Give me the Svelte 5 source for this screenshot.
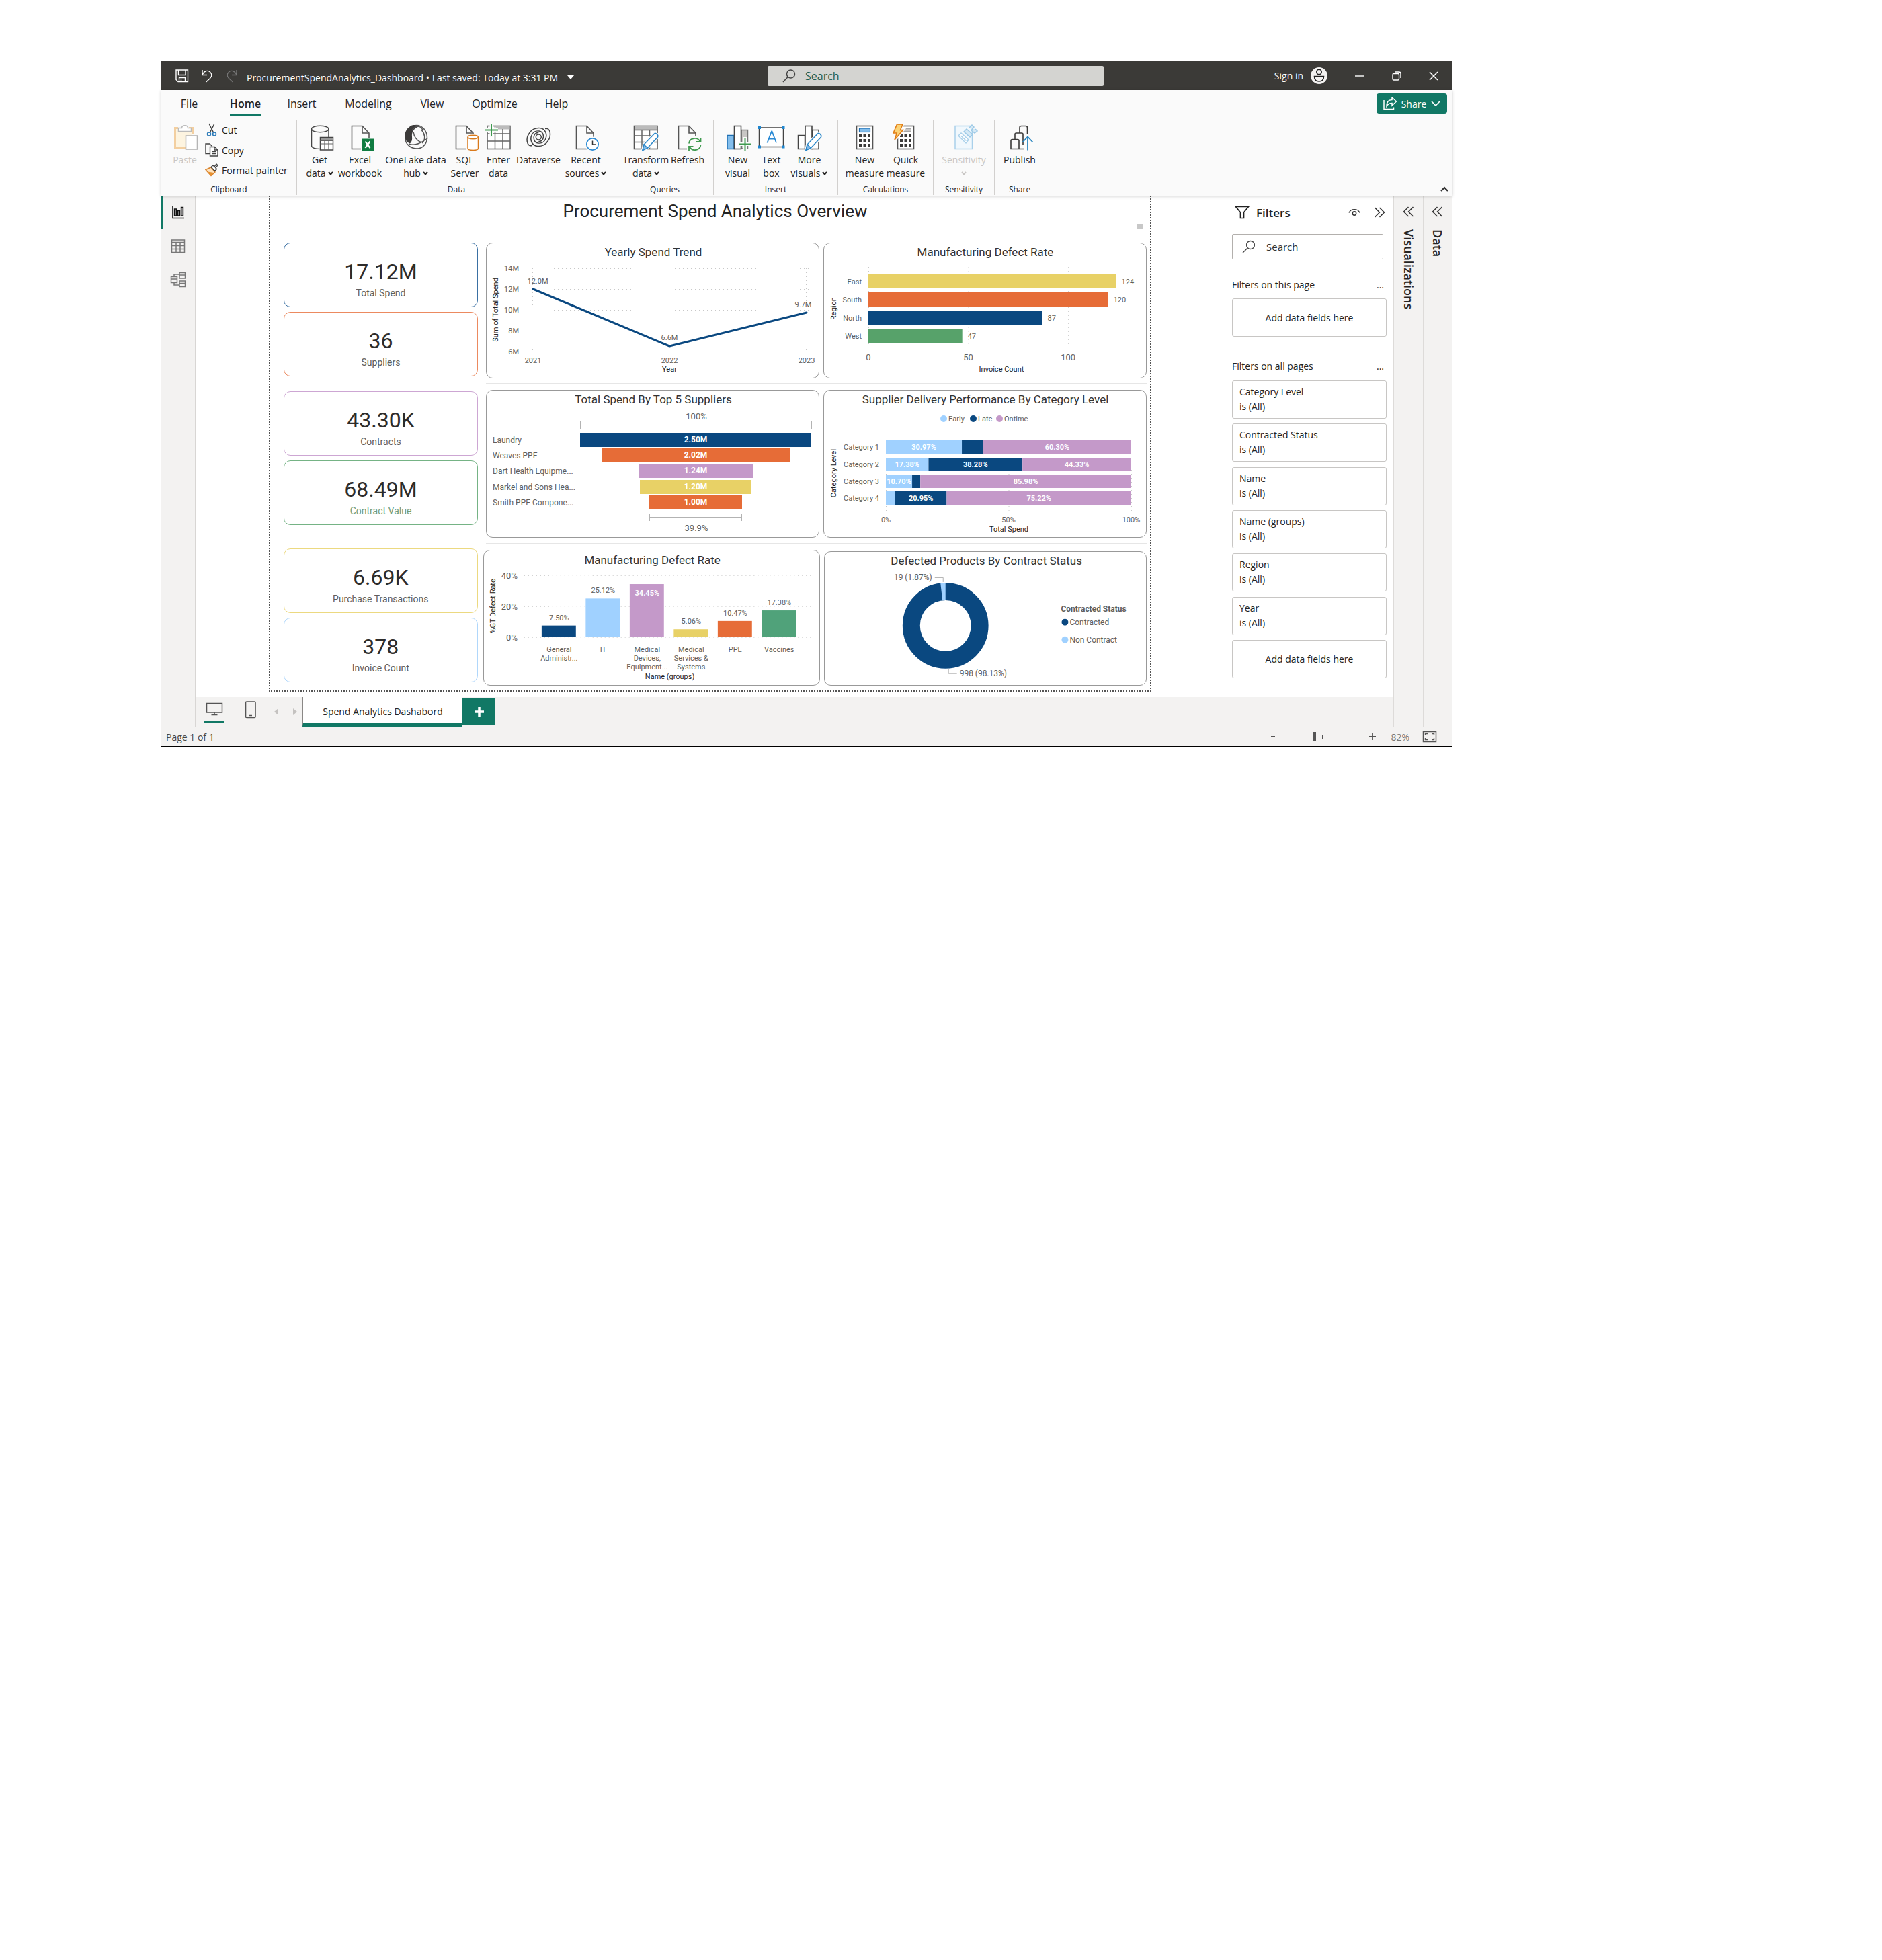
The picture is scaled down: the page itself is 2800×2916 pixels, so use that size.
<script>
  const C = {
    navy: '#0a4880',
    orange: '#e66c37',
    violet: '#c499c9',
    yellow: '#e8d166',
    green: '#57a26a',
    sky: '#a0d1ff',
    teal: '#50a27a'
  };

  const ribbonTabs = [
    { label: 'File', width: 83 },
    { label: 'Home', width: 84, active: true },
    { label: 'Insert', width: 84 },
    { label: 'Modeling', width: 114 },
    { label: 'View', width: 76 },
    { label: 'Optimize', width: 110 },
    { label: 'Help', width: 74 }
  ];

  const ribbonGroups = [
    {
      name: 'Data',
      width: 475,
      items: [
        { icon: 'get', a: 'Get', b: 'data', menu: true, width: 46 },
        { icon: 'excel', a: 'Excel', b: 'workbook', width: 74 },
        { icon: 'onelake', a: 'OneLake data', b: 'hub', menu: true, width: 92 },
        { icon: 'sql', a: 'SQL', b: 'Server', width: 54 },
        { icon: 'enter', a: 'Enter', b: 'data', width: 46 },
        { icon: 'dataverse', a: 'Dataverse', b: '', width: 73 },
        { icon: 'recent', a: 'Recent', b: 'sources', menu: true, width: 68 }
      ]
    },
    {
      name: 'Queries',
      width: 145,
      items: [
        { icon: 'transform', a: 'Transform', b: 'data', menu: true, width: 68 },
        { icon: 'refresh', a: 'Refresh', b: '', width: 56 }
      ]
    },
    {
      name: 'Insert',
      width: 185,
      items: [
        { icon: 'visual', a: 'New', b: 'visual', width: 48 },
        { icon: 'textbox', a: 'Text', b: 'box', width: 52 },
        { icon: 'more', a: 'More', b: 'visuals', menu: true, width: 61 }
      ]
    },
    {
      name: 'Calculations',
      width: 142,
      items: [
        { icon: 'measure', a: 'New', b: 'measure', width: 60 },
        { icon: 'quick', a: 'Quick', b: 'measure', width: 62 }
      ]
    },
    {
      name: 'Sensitivity',
      width: 91,
      items: [{ icon: 'sensitivity', a: 'Sensitivity', b: '', menu: true, width: 80, disabled: true }]
    },
    { name: 'Share', width: 75, items: [{ icon: 'publish', a: 'Publish', b: '', width: 60 }] }
  ];

  const kpis = [
    [
      { value: '17.12M', label: 'Total Spend', tone: 'blue' },
      { value: '36', label: 'Suppliers', tone: 'orange' }
    ],
    [
      { value: '43.30K', label: 'Contracts', tone: 'violet' },
      { value: '68.49M', label: 'Contract Value', tone: 'green' }
    ],
    [
      { value: '6.69K', label: 'Purchase Transactions', tone: 'yellow' },
      { value: '378', label: 'Invoice Count', tone: 'sky' }
    ]
  ];

  const trendTicks = ['14M', '12M', '10M', '8M', '6M'];
  const trendYears = [
    { x: 70, year: '2021' },
    { x: 273, year: '2022' },
    { x: 477, year: '2023' }
  ];

  const regions = [
    { name: 'East', value: 124, fill: C.yellow },
    { name: 'South', value: 120, fill: C.orange },
    { name: 'North', value: 87, fill: C.navy },
    { name: 'West', value: 47, fill: C.green }
  ];
  const regionScale = 2.972;

  const suppliers = [
    { name: 'Laundry', label: '2.50M', width: 344, y: 64, fill: C.navy },
    { name: 'Weaves PPE', label: '2.02M', width: 280, y: 87, fill: C.orange },
    { name: 'Dart Health Equipme...', label: '1.24M', width: 170, y: 110, fill: C.violet },
    { name: 'Markel and Sons Hea...', label: '1.20M', width: 166, y: 134, fill: C.yellow },
    { name: 'Smith PPE Compone...', label: '1.00M', width: 138, y: 157, fill: C.orange }
  ];

  const delivery = [
    { name: 'Category 1', y: 75, parts: [30.97, 8.73, 60.3], labels: ['30.97%', '', '60.30%'] },
    { name: 'Category 2', y: 101, parts: [17.38, 38.28, 44.34], labels: ['17.38%', '38.28%', '44.33%'] },
    { name: 'Category 3', y: 126, parts: [10.7, 3.32, 85.98], labels: ['10.70%', '', '85.98%'] },
    { name: 'Category 4', y: 151, parts: [3.83, 20.95, 75.22], labels: ['', '20.95%', '75.22%'] }
  ];
  const deliveryFill = [C.sky, C.navy, C.violet];
  const deliveryLegend = [
    { name: 'Early', x: 178 },
    { name: 'Late', x: 222 },
    { name: 'Ontime', x: 261 }
  ];

  function segments(row) {
    let start = 0;
    return row.parts.map((p, i) => {
      const seg = { x: 92 + start * 3.65, width: p * 3.65, fill: deliveryFill[i], label: row.labels[i] };
      start += p;
      return seg;
    });
  }

  const defects = [
    { name: ['General', 'Administr...'], value: 7.5, label: '7.50%', fill: C.navy },
    { name: ['IT'], value: 25.12, label: '25.12%', fill: C.sky },
    { name: ['Medical', 'Devices,', 'Equipment...'], value: 34.45, label: '34.45%', fill: C.violet, inside: true },
    { name: ['Medical', 'Services &', 'Systems'], value: 5.06, label: '5.06%', fill: C.yellow },
    { name: ['PPE'], value: 10.47, label: '10.47%', fill: C.orange },
    { name: ['Vaccines'], value: 17.38, label: '17.38%', fill: C.teal }
  ];

  const pageFilters = ['Category Level', 'Contracted Status', 'Name', 'Name (groups)', 'Region', 'Year'];

  let zoom = $state(82);
</script>

{#snippet chevron()}
  <svg class="chev" width="8" height="6" viewBox="0 0 8 6" aria-hidden="true"><path d="M1 1l3 3.4L7 1" fill="none" stroke="currentColor" stroke-width="2" /></svg>
{/snippet}

{#snippet page(x)}
  <path d="M{x} 3.5h15.5l10 10.5v23.5h-25.5z" fill="#fbfbfb" stroke="#555" stroke-width="1.6" />
  <path d="M{x + 15.5} 3.5v10.5h10" fill="none" stroke="#555" stroke-width="1.6" />
{/snippet}

{#snippet pencil()}
  <path d="M17 39.5l2-8.5L34.5 15c2-2 6.5 2 5 5L24.5 36z" fill="#fafafa" stroke="#fafafa" stroke-width="4" />
  <path d="M17 39.5l2-8.5L34.5 15c2-2 6.5 2 5 5L24.5 36z" fill="#fff" stroke="#2a86c8" stroke-width="1.5" />
  <path d="M17 39.5l2-8.5 5.5 5z" fill="#83b9e6" stroke="#2a86c8" stroke-width="1.3" />
{/snippet}

{#snippet calc()}
  <rect x="9.5" y="3.5" width="24" height="34" fill="#fff" stroke="#555" stroke-width="1.6" />
  {#each [16, 23, 30] as y}
    {#each [13, 19.5, 26] as x}
      <rect {x} {y} width="4" height="4" fill="#3b3a39" />
    {/each}
  {/each}
{/snippet}

{#snippet ribbonIcon(name)}
  <svg class="ricon" width="44" height="40" viewBox="0 0 44 40" aria-hidden="true">
    {#if name === 'get'}
      <path d="M9.5 8v25c0 3 6 4.5 12 4.5M35 8v12" fill="none" stroke="#444" stroke-width="1.5" />
      <ellipse cx="22.2" cy="8" rx="12.8" ry="4.8" fill="none" stroke="#444" stroke-width="1.5" />
      <rect x="22.5" y="20.5" width="19" height="18.5" fill="#fff" stroke="#444" stroke-width="1.5" />
      <rect x="23" y="21" width="18" height="4" fill="#999" />
      <path d="M22.5 25.5h19M22.5 30h19M22.5 34.5h19M29 25v14M35 25v14" stroke="#666" stroke-width="1.2" />
    {:else if name === 'excel'}
      {@render page(9.5)}
      <rect x="23" y="21.5" width="20" height="19" fill="#fafafa" />
      <rect x="24" y="22.5" width="18" height="17.5" fill="#107c41" />
      <path d="M29.5 26.5l7 9.5M36.5 26.5l-7 9.5" stroke="#fff" stroke-width="2.2" />
    {:else if name === 'onelake'}
      <path d="M23 2.5c8 0 15.500 8 15.500 18.500 0 8-6 16-15 16S6 31 6 22C6 11 14 2.500 23 2.500z" fill="#fafafa" stroke="#555" stroke-width="1.5" />
      <path d="M12 5c4-4.500 10-3.500 13.500-.5-6 2-10.500 8-9.500 15 .5 4 0 7-3 10-6-2-8.500-8-7.500-14C6.200 11 9 7 12 5z" fill="#3b3a39" />
      <path d="M16 10c6-8 14-7 16 0M18 12c1 9 7 14 12 16M11 30c10 4 19-2 28-8M30 9c5 6 7 14 1 20" fill="none" stroke="#555" stroke-width="1.5" />
    {:else if name === 'sql'}
      {@render page(8.5)}
      <path d="M24 16h20v24H24z" fill="#fafafa" />
      <path d="M26 20v16.5c0 4 15.5 4 15.5 0V20" fill="#fff" stroke="#d97a1c" stroke-width="1.5" />
      <ellipse cx="33.7" cy="20" rx="7.7" ry="2.7" fill="#fff" stroke="#d97a1c" stroke-width="1.5" />
    {:else if name === 'enter'}
      <rect x="5" y="3.5" width="34" height="34" fill="#fff" stroke="#666" stroke-width="1.6" />
      <rect x="18" y="4" width="20.5" height="4.5" fill="#bbb" />
      <path d="M5 15h34M5 26h34M16.5 4v33M28 8v29" stroke="#666" stroke-width="1.5" />
      <path d="M0 9.5h21M11 -1v21" stroke="#fafafa" stroke-width="5" />
      <path d="M2 9.5h19M11 0v19" stroke="#3f9a4f" stroke-width="2" />
    {:else if name === 'dataverse'}
      <g fill="none" stroke="#444" stroke-width="1.5">
        {#each [0, 180] as turn}
          <path transform="rotate({turn} 22.3 20)" d="M32 7.5C40 5 42 18 36 26c-3 5-9 8-15 7.500C12 33 9 24 12 17c2-5 7-6.500 11-6C29 12 30.500 18 29 22c-1 4-4 4.500-6.700 4.500" />
        {/each}
        <circle cx="22.3" cy="20" r="4" />
      </g>
    {:else if name === 'recent'}
      {@render page(7.5)}
      <circle cx="31.5" cy="30.5" r="11" fill="#fafafa" />
      <circle cx="31.5" cy="30.5" r="8.7" fill="#fff" stroke="#2a8ad4" stroke-width="1.7" />
      <path d="M31.5 25.5v5.5h4.5" fill="none" stroke="#333" stroke-width="1.5" />
    {:else if name === 'transform'}
      <rect x="4.5" y="3.5" width="34.5" height="34" fill="#fff" stroke="#555" stroke-width="1.6" />
      <rect x="5" y="4" width="33.5" height="5" fill="#bbb" />
      <path d="M4.5 9.5h34.5M4.5 18h34.5M4.5 27.5h34.5M16 9.5v28M27.5 9.5v28" stroke="#666" stroke-width="1.5" />
      {@render pencil()}
    {:else if name === 'refresh'}
      {@render page(8.5)}
      <rect x="21" y="19" width="23" height="22" fill="#fafafa" />
      <path d="M24 29.5c1-9 13-10 16.5-3M41.5 31.5c-1 9-13 10-16.5 3M41.5 21v6h-6.5M24 40v-6h6.5" fill="none" stroke="#3f9a4f" stroke-width="1.8" />
    {:else if name === 'visual'}
      <rect x="27" y="9.5" width="9.5" height="27.5" fill="#c8c6c4" stroke="#777" stroke-width="1.5" />
      <rect x="6" y="17.5" width="10" height="20" fill="#83beec" stroke="#1f6fb2" stroke-width="1.5" />
      <rect x="16.5" y="3.5" width="10" height="34" fill="#fff" stroke="#444" stroke-width="1.6" />
      <path d="M22 30.5h22M32.5 20v20" stroke="#fafafa" stroke-width="5" />
      <path d="M23.5 30.5h18.5M32.5 21v19" stroke="#3f9a4f" stroke-width="2" />
    {:else if name === 'textbox'}
      <rect x="3.5" y="6" width="36" height="28.5" fill="#fff" stroke="#444" stroke-width="1.5" />
      <path d="M15.5 28.5l6.5-17h.5l6.5 17M18 22.5h9" fill="none" stroke="#2a8ad4" stroke-width="1.8" />
      {#each [2, 37.5] as x}
        {#each [4, 32.5] as y}
          <rect {x} {y} width="4" height="4" fill="#1f86cf" />
        {/each}
      {/each}
    {:else if name === 'more'}
      <rect x="26.5" y="9.5" width="9.5" height="28" fill="#fff" stroke="#444" stroke-width="1.5" />
      <rect x="5.5" y="17.5" width="10" height="20" fill="#fff" stroke="#444" stroke-width="1.5" />
      <rect x="16" y="3.5" width="10" height="34" fill="#fff" stroke="#444" stroke-width="1.6" />
      {@render pencil()}
    {:else if name === 'measure'}
      {@render calc()}
      <rect x="13.5" y="7" width="16" height="5.5" fill="#83beec" stroke="#1f6fb2" stroke-width="1.2" />
    {:else if name === 'quick'}
      {@render calc()}
      <rect x="15" y="7" width="14.5" height="5" fill="#c8c6c4" stroke="#888" />
      <path d="M8.5 0H18l-3.5 8.5H19L5 26l3-11H2.5z" fill="#fafafa" stroke="#fafafa" stroke-width="3" />
      <path d="M8.5 1H17l-3.5 8.5h4L5 24l3.2-10H3z" fill="#fcd377" stroke="#e07b12" stroke-width="1.5" />
    {:else if name === 'sensitivity'}
      <rect x="9" y="3.5" width="25.5" height="34" fill="#f1f8fd" stroke="#a9d0ea" stroke-width="1.5" />
      <path d="M14 18l4-4 11 10-4 5zM17.5 18l8 7.5" fill="#fff" stroke="#a9d0ea" stroke-width="1.5" />
      <path d="M22 12l4-4 9 8-4 4zM29 7l5-5 3 3-4 5 5 4 4-3-3-3" fill="#d5e9f6" stroke="#9cc9e6" stroke-width="1.5" />
    {:else if name === 'publish'}
      <path d="M9 37.5v-12q0-2 2-2h8q2 0 2 2v12zM15 23v-7q0-2 2-2h8q2 0 2 2v16M22 13.5V6q0-2.5 2.5-2.5h6.5q2.5 0 2.5 2.5v9M21 37.5h8" fill="none" stroke="#3b3a39" stroke-width="1.6" />
      <path d="M34 39.5V20M26.5 27.5L34 19.5l7.5 8" fill="none" stroke="#2a86c0" stroke-width="1.8" />
    {/if}
  </svg>
{/snippet}

{#snippet kpiPair(list)}
  <div class="kpis">
    {#each list as k}
      <div class="kpi {k.tone}">
        <strong>{k.value}</strong>
        <span>{k.label}</span>
      </div>
    {/each}
  </div>
{/snippet}

<div class="desktop">
  <div class="window">
    <header class="titlebar">
      <div class="quick">
        <button aria-label="Save"><svg width="20" height="20" viewBox="0 0 20 20"><path d="M1 1h17.5v17.5H4L1 15.5zM4.5 1v7.5h10.5V1M5.5 18.5v-6h9v6M8.5 18.5v-3" fill="none" stroke="#fff" stroke-width="1.4" /></svg></button>
        <button aria-label="Undo"><svg width="20" height="20" viewBox="0 0 20 20"><path d="M3 1v7.500h7M3 8c3-6 8-7 11.500-4 3 3 3 6.500 0 9.500L8.500 19" fill="none" stroke="#fff" stroke-width="1.4" /></svg></button>
        <button aria-label="Redo"><svg width="20" height="20" viewBox="0 0 20 20"><path d="M17 1v7.500h-7M17 8c-3-6-8-7-11.500-4-3 3-3 6.500 0 9.500L11.500 19" fill="none" stroke="#777" stroke-width="1.4" /></svg></button>
      </div>
      <button class="docname">ProcurementSpendAnalytics_Dashboard • Last saved: Today at 3:31 PM<svg width="10" height="6" viewBox="0 0 10 6"><path d="M0 0h10L5 6z" fill="#fff" /></svg></button>
      <label class="topsearch">
        <svg width="20" height="20" viewBox="0 0 20 20"><circle cx="12.5" cy="7" r="6" fill="none" stroke="#444" stroke-width="1.5" /><path d="M8.2 11.5L1 19" stroke="#444" stroke-width="1.5" /></svg>
        <input type="text" placeholder="Search" aria-label="Search" />
      </label>
      <div class="winctl">
        <button class="signin">Sign in
          <svg width="25" height="25" viewBox="0 0 25 25"><circle cx="12.5" cy="12.5" r="12.5" fill="#f3f2f1" /><circle cx="12.5" cy="7" r="3.7" fill="none" stroke="#222" stroke-width="1.6" /><path d="M5.5 13.500h14c0 5-3 7.500-7 7.500s-7-2.500-7-7.500z" fill="none" stroke="#222" stroke-width="1.6" /></svg>
        </button>
        <button aria-label="Minimize"><svg width="14" height="14" viewBox="0 0 14 14"><path d="M0 7h14" stroke="#fff" stroke-width="1.4" /></svg></button>
        <button aria-label="Restore"><svg width="14" height="14" viewBox="0 0 14 14"><rect x="1" y="3.5" width="9.5" height="9.5" rx="1.5" fill="none" stroke="#fff" stroke-width="1.4" /><path d="M4 1h6.5q2.5 0 2.5 2.5V10" fill="none" stroke="#fff" stroke-width="1.4" /></svg></button>
        <button aria-label="Close"><svg width="14" height="14" viewBox="0 0 14 14"><path d="M1 1l12 12M13 1L1 13" stroke="#fff" stroke-width="1.5" /></svg></button>
      </div>
    </header>

    <section class="ribbon">
      <nav class="tabs">
        {#each ribbonTabs as t}
          <button class:active={t.active} style="width:{t.width}px"><span>{t.label}</span></button>
        {/each}
        <button class="share">
          <svg width="20" height="20" viewBox="0 0 20 20"><path d="M1 5v13.5h14.5v-3" fill="none" stroke="#fff" stroke-width="1.5" /><path d="M13 1l6.500 6L13 13V9.500c-4 0-6 1-8 4.500 0-6 3-9.500 8-9.500z" fill="none" stroke="#fff" stroke-width="1.5" /></svg>
          Share
          <svg width="14" height="8" viewBox="0 0 14 8"><path d="M1 1l6 6 6-6" fill="none" stroke="#fff" stroke-width="1.7" /></svg>
        </button>
      </nav>
      <div class="groups">
        <div class="group clip">
          <div class="items">
            <button class="big off">
              <svg class="ricon" width="44" height="40" viewBox="0 0 44 40" aria-hidden="true">
                <path d="M12 6.5H7.5v29h17" fill="none" stroke="#f3cfa0" stroke-width="3" /><path d="M28 6.5h5.5V16" fill="none" stroke="#f3cfa0" stroke-width="3" />
                <rect x="9" y="8" width="23" height="26" fill="#fdf4e0" />
                <path d="M12.5 11.5v-5h5c0-5 9-5 9 0h5v5z" fill="#fff" stroke="#bbb" stroke-width="1.5" />
                <rect x="23.5" y="18" width="17" height="20" fill="#fff" stroke="#b5b5b5" stroke-width="1.6" />
              </svg>
              <span>Paste</span>
            </button>
            <div class="small">
              <button><svg width="20" height="20" viewBox="0 0 20 20"><path d="M6 1l6.5 13M14 1L7.5 14" stroke="#444" stroke-width="1.5" /><circle cx="6" cy="16.5" r="2.5" fill="none" stroke="#2a7ab8" stroke-width="1.5" /><circle cx="14" cy="16.5" r="2.5" fill="none" stroke="#2a7ab8" stroke-width="1.5" /></svg>Cut</button>
              <button><svg width="20" height="20" viewBox="0 0 20 20"><path d="M7 15.5H1V1h6l3.5 3.5" fill="none" stroke="#444" stroke-width="1.4" /><path d="M7.5 5.5h7l4.5 4.5v9H7.5zM14 5.5V10h5M10 12.5h6M10 15.5h6" fill="#fff" stroke="#444" stroke-width="1.4" /></svg>Copy</button>
              <button><svg width="20" height="20" viewBox="0 0 20 20"><path d="M1 9.5L9 6l6 7-6 5.5z" fill="#fde3c0" stroke="#d9822b" stroke-width="1.5" /><path d="M4 12.5l9 1.5-4 4.5z" fill="#e8912f" /><path d="M9 5.5l3-2.5 2 2 3-4 2 2-3.5 3.5 2 2-3 3z" fill="#fff" stroke="#444" stroke-width="1.4" /></svg>Format painter</button>
            </div>
          </div>
          <div class="gname">Clipboard</div>
        </div>
        {#each ribbonGroups as g}
          <div class="group" style="width:{g.width}px">
            <div class="items">
              {#each g.items as it}
                <button class="big" class:off={it.disabled} style="width:{it.width}px">
                  {@render ribbonIcon(it.icon)}
                  <span>{it.a}</span>
                  <span>{it.b}{#if it.menu}{@render chevron()}{/if}</span>
                </button>
              {/each}
            </div>
            <div class="gname">{g.name}</div>
          </div>
        {/each}
        <button class="collapse" aria-label="Collapse ribbon"><svg width="12" height="8" viewBox="0 0 12 8"><path d="M1 7l5-5 5 5" fill="none" stroke="#333" stroke-width="2.2" /></svg></button>
      </div>
    </section>

    <div class="body">
      <nav class="rail">
        <button class="current" aria-label="Report view"><svg width="24" height="24" viewBox="0 0 24 24"><path d="M4 3v17.5h17" fill="none" stroke="#111" stroke-width="1.6" /><path d="M6.5 7h3v10h-3zM11.5 9.5h3V17h-3zM16.5 4.5h3V17h-3z" fill="#999" stroke="#111" stroke-width="1.4" /></svg></button>
        <button aria-label="Table view"><svg width="24" height="24" viewBox="0 0 24 24"><path d="M2.5 3h19v18.5h-19zM2.5 6.5h19M2.5 11.5h19M2.5 16.5h19M9 6.5v15M15 6.5v15" fill="none" stroke="#777" stroke-width="1.5" /></svg></button>
        <button aria-label="Model view"><svg width="24" height="24" viewBox="0 0 24 24"><path d="M1.5 7.5h9v9h-9zM1.5 11h9M14 1.5h8.5V10H14zM14 5h8.5M14 14h8.5v8.5H14zM14 17.5h8.5M6 7.5V4h8M6 16.5V20h8" fill="none" stroke="#777" stroke-width="1.5" /></svg></button>
      </nav>

      <div class="middle">
        <div class="work">
          <main class="canvas">
            <div class="report">
              <div class="head">
                <h1>Procurement Spend Analytics Overview</h1>
                <i class="marker"></i>
              </div>

              <div class="row first">
                {@render kpiPair(kpis[0])}
                <section class="card">
                  <svg viewBox="1 1 494 200" role="img" aria-label="Yearly Spend Trend">
                    <text class="t" x="249" y="20">Yearly Spend Trend</text>
                    {#each trendTicks as tick, i}
                      <path class="grid" d="M59 {38.5 + i * 31}H485" />
                      <text class="s end" x="49" y={42 + i * 31}>{tick}</text>
                    {/each}
                    {#each trendYears as p}
                      <path class="grid" d="M{p.x - 0.5} 38V163" />
                      <text class="s mid" x={p.x} y="179">{p.year}</text>
                    {/each}
                    <path d="M70 69L273 154L477 104" fill="none" stroke={C.navy} stroke-width="3" stroke-linejoin="round" stroke-linecap="round" />
                    <text class="s mid" x="77" y="61">12.0M</text>
                    <text class="s mid" x="273" y="145">6.6M</text>
                    <text class="s mid" x="472" y="96">9.7M</text>
                    <text class="s mid dark" x="273" y="192">Year</text>
                    <text class="s mid dark" transform="translate(18 100) rotate(-90)">Sum of Total Spend</text>
                  </svg>
                </section>
                <section class="card">
                  <svg viewBox="1 1 479 200" role="img" aria-label="Manufacturing Defect Rate by region">
                    <text class="t" x="241" y="20">Manufacturing Defect Rate</text>
                    {#each [0, 50, 100] as v}
                      <path class="grid" d="M{67.5 + v * regionScale} 36V160" />
                      <text class="l mid" x={67 + v * regionScale} y="175">{v}</text>
                    {/each}
                    {#each regions as r, i}
                      <rect x="67" y={47 + i * 27} width={r.value * regionScale} height="21" fill={r.fill} />
                      <text class="s end" x="57" y={62 + i * 27}>{r.name}</text>
                      <text class="s" x={75 + r.value * regionScale} y={62 + i * 27}>{r.value}</text>
                    {/each}
                    <text class="s mid dark" x="265" y="192">Invoice Count</text>
                    <text class="s mid dark" transform="translate(19 98) rotate(-90)">Region</text>
                  </svg>
                </section>
                <hr />
              </div>

              <div class="row second">
                {@render kpiPair(kpis[1])}
                <section class="card">
                  <svg viewBox="1 1 494 218" role="img" aria-label="Total Spend By Top 5 Suppliers">
                    <text class="t" x="249" y="20">Total Spend By Top 5 Suppliers</text>
                    <text class="l mid" x="313" y="44">100%</text>
                    <path class="bracket" d="M140 52.5H484M140.5 47v11M484.5 47v11" />
                    {#each suppliers as s}
                      <rect x={312 - s.width / 2} y={s.y} width={s.width} height="21" fill={s.fill} />
                      <text class="m" x="10" y={s.y + 15}>{s.name}</text>
                      <text class="m mid in" x="312" y={s.y + 14}>{s.label}</text>
                    {/each}
                    <path class="bracket" d="M243 189.5H381M243.5 184v11M380.5 184v11" />
                    <text class="l mid" x="313" y="210">39.9%</text>
                  </svg>
                </section>
                <section class="card">
                  <svg viewBox="0 1 479 218" role="img" aria-label="Supplier Delivery Performance By Category Level">
                    <text class="t" x="240" y="20">Supplier Delivery Performance By Category Level</text>
                    {#each deliveryLegend as l, i}
                      <circle cx={l.x} cy="43" r="5" fill={deliveryFill[i]} />
                      <text class="s" x={l.x + 7} y="47">{l.name}</text>
                    {/each}
                    {#each [0, 50, 100] as v}
                      <path class="grid" d="M{92.5 + v * 3.65} 65V182" />
                      <text class="s mid" x={92 + v * 3.65} y="197">{v}%</text>
                    {/each}
                    {#each delivery as row}
                      <text class="s end" x="82" y={row.y + 14}>{row.name}</text>
                      {#each segments(row) as s}
                        <rect x={s.x} y={row.y} width={s.width} height="20" fill={s.fill} />
                        <text class="s mid in" x={s.x + s.width / 2} y={row.y + 14}>{s.label}</text>
                      {/each}
                    {/each}
                    <text class="s mid dark" x="275" y="211">Total Spend</text>
                    <text class="s mid dark" transform="translate(18 124) rotate(-90)">Category Level</text>
                  </svg>
                </section>
                <hr />
              </div>

              <div class="row third">
                {@render kpiPair(kpis[2])}
                <section class="card">
                  <svg viewBox="1 1 500 200" role="img" aria-label="Manufacturing Defect Rate by group">
                    <text class="t" x="252" y="21">Manufacturing Defect Rate</text>
                    {#each ['40%', '20%', '0%'] as tick, i}
                      <path class="grid" d="M61 {38.5 + i * 46}H493" />
                      <text class="l end" x="51" y={43 + i * 46}>{tick}</text>
                    {/each}
                    {#each defects as d, i}
                      {@const cx = 113 + i * 65.6}
                      {@const top = 130 - d.value * 2.29}
                      <rect x={cx - 26} y={top} width="51" height={130 - top} fill={d.fill} />
                      <text class="s mid" class:in={d.inside} x={cx} y={d.inside ? top + 17 : top - 8}>{d.label}</text>
                      {#each d.name as line, n}
                        <text class="s mid" x={cx} y={152 + n * 13}>{line}</text>
                      {/each}
                    {/each}
                    <text class="s mid dark" x="278" y="192">Name (groups)</text>
                    <text class="s mid dark" transform="translate(18 84) rotate(-90)">%GT Defect Rate</text>
                  </svg>
                </section>
                <section class="card last">
                  <svg viewBox="1 1 479 198" role="img" aria-label="Defected Products By Contract Status">
                    <text class="t" x="242" y="20">Defected Products By Contract Status</text>
                    <circle cx="181" cy="111" r="51" fill="none" stroke={C.navy} stroke-width="26" />
                    <path d="M181 47v26a38 38 0 0 0-4.500.3l-3-25.800a64 64 0 0 1 7.500-.5z" fill={C.sky} />
                    <path class="bracket" d="M165 39.5h12.5V46M185.5 176v6.5H198" />
                    <text class="m end" x="161" y="43">19 (1.87%)</text>
                    <text class="m" x="202" y="186">998 (98.13%)</text>
                    <text class="m bold" x="353" y="90">Contracted Status</text>
                    <circle cx="359" cy="106" r="5" fill={C.navy} />
                    <text class="m" x="366" y="110">Contracted</text>
                    <circle cx="359" cy="132" r="5" fill={C.sky} />
                    <text class="m" x="366" y="136">Non Contract</text>
                  </svg>
                </section>
              </div>
            </div>
          </main>

          <aside class="filters">
            <div class="fhead">
              <svg width="22" height="20" viewBox="0 0 22 20"><path d="M1.5 1.5h19L13.5 10v8.5h-5V10z" fill="none" stroke="#222" stroke-width="1.7" /></svg>
              <h2>Filters</h2>
              <button aria-label="Show filters"><svg width="18" height="12" viewBox="0 0 18 12"><path d="M1 6.5c3-6.5 13-6.5 16 0" fill="none" stroke="#333" stroke-width="1.4" /><circle cx="9" cy="7.5" r="2.7" fill="none" stroke="#333" stroke-width="1.5" /></svg></button>
              <button aria-label="Collapse filters"><svg width="18" height="16" viewBox="0 0 18 16"><path d="M1.5 1l7 7-7 7M8.5 1l7 7-7 7" fill="none" stroke="#333" stroke-width="1.5" /></svg></button>
            </div>
            <label class="fsearch">
              <svg width="20" height="20" viewBox="0 0 20 20"><circle cx="12.5" cy="7.5" r="6" fill="none" stroke="#444" stroke-width="1.3" /><path d="M8.2 12L1 19" stroke="#444" stroke-width="1.3" /></svg>
              <input type="text" placeholder="Search" aria-label="Search filters" />
            </label>
            <div class="fsection"><span>Filters on this page</span><button aria-label="More options">...</button></div>
            <div class="drop">Add data fields here</div>
            <div class="fsection all"><span>Filters on all pages</span><button aria-label="More options">...</button></div>
            <div class="flist">
              {#each pageFilters as f}
                <div class="fcard"><span>{f}</span><span>is (All)</span></div>
              {/each}
              <div class="drop">Add data fields here</div>
            </div>
          </aside>
        </div>

        <footer class="pages">
          <button class="device on" aria-label="Desktop layout"><svg width="26" height="20" viewBox="0 0 26 20"><path d="M1.5 1.5h23v13.5h-23zM13 15v3.5M8.5 18.5h9" fill="none" stroke="#555" stroke-width="1.5" /></svg></button>
          <button class="device phone" aria-label="Mobile layout"><svg width="18" height="26" viewBox="0 0 18 26"><rect x="1.5" y="1" width="14.5" height="23.5" rx="1.5" fill="none" stroke="#555" stroke-width="1.6" /><path d="M7 21.5h4" stroke="#555" stroke-width="1.5" /></svg></button>
          <button class="arrow" aria-label="Previous page"><svg width="6" height="10" viewBox="0 0 6 10"><path d="M6 0v10L0 5z" fill="#c4c2c0" /></svg></button>
          <button class="arrow" aria-label="Next page"><svg width="6" height="10" viewBox="0 0 6 10"><path d="M0 0v10l6-5z" fill="#c4c2c0" /></svg></button>
          <button class="sheet">Spend Analytics Dashabord</button>
          <button class="add" aria-label="New page"><svg width="14" height="14" viewBox="0 0 14 14"><path d="M7 0v14M0 7h14" stroke="#fff" stroke-width="3.5" /></svg></button>
        </footer>
      </div>

      {#each ['Visualizations', 'Data'] as pane}
        <aside class="pane">
          <button aria-label="Expand {pane}"><svg width="18" height="16" viewBox="0 0 18 16"><path d="M8.5 1l-7 7 7 7M15.5 1l-7 7 7 7" fill="none" stroke="#333" stroke-width="1.5" /></svg></button>
          <span>{pane}</span>
        </aside>
      {/each}
    </div>

    <footer class="status">
      <span>Page 1 of 1</span>
      <div class="zoom">
        <button aria-label="Zoom out"><svg width="6" height="10" viewBox="0 0 6 10"><path d="M0 5h6" stroke="#555" stroke-width="2" /></svg></button>
        <input type="range" min="10" max="190" bind:value={zoom} aria-label="Zoom level" />
        <button aria-label="Zoom in"><svg width="10" height="10" viewBox="0 0 10 10"><path d="M0 5h10M5 0v10" stroke="#555" stroke-width="1.8" /></svg></button>
        <span class="pct">{zoom}%</span>
        <button aria-label="Fit to page"><svg width="22" height="18" viewBox="0 0 22 18"><path d="M1.5 1.5h19v15h-19z" fill="none" stroke="#555" stroke-width="1.5" /><path d="M4.5 7V4.5H8M14 4.5h3.5V7M4.5 11v2.5H8M14 13.5h3.5V11" fill="none" stroke="#555" stroke-width="1.4" /></svg></button>
      </div>
    </footer>
  </div>
</div>

<style>
  :global(body) {
    background: #fff;
  }
  * {
    box-sizing: border-box;
  }
  button,
  input {
    font: inherit;
    color: inherit;
    border: 0;
    background: none;
    padding: 0;
    margin: 0;
  }
  svg {
    display: block;
    flex: none;
  }
  .desktop {
    padding: 91px 640px 0 240px;
    font-family: 'Open Sans', 'Noto Sans', sans-serif;
    font-size: 14px;
    color: #252423;
  }
  .window {
    display: flex;
    flex-direction: column;
    border-bottom: 1px solid #000;
  }

  /* Title bar */
  .titlebar {
    height: 43px;
    background: #3b3a37;
    color: #fff;
    display: flex;
    align-items: center;
  }
  .quick {
    display: flex;
    gap: 17px;
    padding-left: 21px;
  }
  .docname {
    margin-left: 12px;
    padding-top: 5px;
    display: flex;
    align-items: center;
    gap: 14px;
    width: 525px;
    font-size: 14px;
    white-space: nowrap;
  }
  .topsearch {
    flex: 0 1 500px;
    margin-left: 250px;
    height: 30px;
    border-radius: 2px;
    background: #d4d4d1;
    display: flex;
    align-items: center;
    padding-left: 22px;
    gap: 14px;
  }
  .topsearch input {
    flex: 1;
    min-width: 0;
    font-size: 16px;
  }
  .topsearch input::placeholder {
    color: #1d5f52;
    opacity: 1;
  }
  .winctl {
    margin-left: auto;
    display: flex;
    align-items: center;
    gap: 41px;
    padding-right: 20px;
  }
  .signin {
    display: flex;
    align-items: center;
    gap: 11px;
  }

  /* Ribbon */
  .ribbon {
    background: #fafafa;
    box-shadow: 0 1px 5px rgba(0, 0, 0, 0.2);
    position: relative;
    height: 157px;
  }
  .tabs {
    display: flex;
    height: 45px;
    font-size: 16px;
  }
  .tabs > button:not(.share) {
    display: flex;
    justify-content: center;
    align-items: flex-start;
    line-height: 22px;
    padding-top: 9px;
  }
  .tabs span {
    padding-bottom: 4px;
  }
  .tabs .active span {
    font-weight: 600;
    border-bottom: 3px solid #117865;
  }
  .share {
    margin: 5px 7px 0 auto;
    width: 105px;
    height: 30px;
    border-radius: 4px;
    background: #117865;
    color: #fff;
    font-size: 14px;
    display: flex;
    align-items: center;
    justify-content: center;
    gap: 7px;
  }
  .groups {
    display: flex;
    height: 111px;
  }
  .group {
    flex: none;
    border-right: 1px solid #d2d0ce;
    display: flex;
    flex-direction: column;
  }
  .clip {
    width: 202px;
  }
  .items {
    display: flex;
    justify-content: center;
    padding-top: 5px;
    flex: 1;
  }
  .clip .items {
    justify-content: flex-start;
    padding-left: 13px;
  }
  .big {
    display: flex;
    flex-direction: column;
    align-items: center;
    line-height: 20px;
    white-space: nowrap;
  }
  .big span {
    display: flex;
    align-items: center;
    gap: 3px;
    min-height: 20px;
  }
  .ricon {
    overflow: visible;
    margin-bottom: 4px;
  }
  .off {
    color: #c8c6c4;
  }
  .small {
    display: flex;
    flex-direction: column;
    padding-left: 8px;
    gap: 8px;
  }
  .small button {
    height: 22px;
    display: flex;
    align-items: center;
    gap: 5px;
    margin-top: -2px;
    margin-bottom: 2px;
    white-space: nowrap;
  }
  .gname {
    text-align: center;
    font-size: 12px;
    line-height: 16px;
  }
  .collapse {
    margin: auto 5px 5px auto;
  }

  /* Body */
  .body {
    display: flex;
    min-height: 790px;
  }
  .rail {
    width: 51px;
    background: #f3f2f1;
    border-right: 1px solid #d8d6d4;
  }
  .rail button {
    display: flex;
    align-items: center;
    justify-content: center;
    width: 50px;
    height: 50px;
  }
  .rail .current {
    border-left: 3px solid #117865;
    padding-right: 3px;
  }
  .middle {
    flex: 1;
    min-width: 0;
    display: flex;
    flex-direction: column;
  }
  .work {
    flex: 1;
    display: flex;
  }
  .canvas {
    flex: 1;
    min-width: 0;
    padding: 0 109px 8px;
  }
  .report {
    border: 2px dotted #555;
    border-top: 0;
    padding: 0 5px 7px 20px;
    font-family: Roboto, 'Open Sans', sans-serif;
  }
  .head {
    display: grid;
    height: 49px;
    margin-bottom: 21px;
  }
  .head > * {
    grid-area: 1 / 1;
  }
  h1 {
    margin: 0;
    font-weight: 400;
    font-size: 26px;
    line-height: 46px;
    text-align: center;
  }
  .marker {
    width: 9px;
    height: 7px;
    background: #c8c8c8;
    justify-self: end;
    align-self: end;
    margin-right: 5px;
  }
  .row {
    display: grid;
    column-gap: 6px;
  }
  .row .kpis {
    margin-right: 6px;
    grid-column: 1;
  }
  .row.first,
  .row.second {
    grid-template-columns: 295fr 496fr 481fr;
  }
  .row.third {
    grid-template-columns: 291fr 502fr 481fr;
  }
  .row.third .kpis {
    margin-right: 2px;
  }
  hr {
    grid-column: 2 / -1;
    width: 100%;
    height: 2px;
    border: 0;
    background: #e6e6e6;
    margin: 7px 0 8px;
  }
  .second hr {
    margin: 8px 0 6px;
  }
  .kpis {
    display: flex;
    flex-direction: column;
    gap: 7px;
  }
  .second .kpis,
  .third .card {
    margin-top: 2px;
  }
  .third .card.last {
    margin-top: 4px;
  }
  .kpi {
    height: 96px;
    border: 1px solid;
    border-radius: 10px;
    display: flex;
    flex-direction: column;
    align-items: center;
    padding-top: 24px;
  }
  .kpi strong {
    font-weight: 400;
    font-size: 32px;
    line-height: 36px;
    color: #2d2c2b;
  }
  .kpi span {
    font-size: 14px;
    line-height: 20px;
    margin-top: 4px;
    color: #605e5c;
  }
  .blue {
    border-color: #3a70a3;
  }
  .orange {
    border-color: #ec8a60;
  }
  .violet {
    border-color: #cda6d3;
  }
  .green {
    border-color: #75b385;
  }
  .kpi.green span {
    color: #6f9b78;
  }
  .yellow {
    border-color: #ecd980;
  }
  .sky {
    border-color: #b0d7fb;
  }
  .card {
    border: 1px solid #999;
    border-radius: 10px;
  }
  .card svg {
    width: 100%;
  }

  /* Chart text */
  .t {
    font-size: 17px;
    fill: #333;
    text-anchor: middle;
  }
  .s {
    font-size: 11px;
    fill: #605e5c;
  }
  .m {
    font-size: 12px;
    fill: #605e5c;
  }
  .l {
    font-size: 13px;
    fill: #605e5c;
  }
  .mid {
    text-anchor: middle;
  }
  .end {
    text-anchor: end;
  }
  .dark {
    fill: #252423;
  }
  .bold {
    font-weight: 700;
  }
  .in {
    fill: #fff;
    font-weight: 700;
  }
  .grid {
    fill: none;
    stroke: #c8c8c8;
    stroke-width: 1;
    stroke-dasharray: 1 5;
  }
  .bracket {
    fill: none;
    stroke: #b3b3b3;
    stroke-width: 1;
  }

  /* Filters */
  .filters {
    width: 251px;
    border-left: 1px solid #b3b0ad;
    background: #fff;
  }
  .fhead {
    display: flex;
    align-items: center;
    height: 50px;
    padding: 0 11px 0 14px;
  }
  h2 {
    margin: 0 auto 0 10px;
    font-size: 17px;
    font-weight: 600;
  }
  .fhead button + button {
    margin-left: 20px;
  }
  .fsearch {
    display: flex;
    align-items: center;
    gap: 16px;
    margin: 7px 15px 5px 10px;
    height: 38px;
    border: 1px solid #b3b0ad;
    border-radius: 2px;
    padding-left: 14px;
  }
  .fsearch input {
    flex: 1;
    min-width: 0;
    font-size: 15px;
  }
  .fsearch input::placeholder {
    color: #333;
    opacity: 1;
  }
  .fsection {
    display: flex;
    justify-content: space-between;
    align-items: center;
    height: 53px;
    padding: 10px 14px 0 10px;
    border-top: 1px solid #b3b0ad;
  }
  .fsection.all {
    border-top: 0;
    height: 65px;
    padding-top: 22px;
  }
  .drop,
  .fcard {
    height: 57px;
    border: 1px solid #c8c6c4;
    border-radius: 3px;
  }
  .drop {
    margin: 0 10px;
    display: flex;
    align-items: center;
    justify-content: center;
  }
  .flist {
    display: flex;
    flex-direction: column;
    justify-content: space-between;
    min-height: 443px;
    margin: 0 10px;
  }
  .flist .drop {
    margin: 0;
  }
  .fcard {
    display: flex;
    flex-direction: column;
    line-height: 22px;
    padding: 5px 10px;
  }

  .pane {
    width: 44px;
    background: #f3f2f1;
    border-left: 1px solid #dddbd9;
    display: flex;
    flex-direction: column;
    align-items: center;
    padding-top: 16px;
  }
  .pane span {
    writing-mode: vertical-rl;
    margin-top: 18px;
    font-size: 18px;
    font-weight: 600;
    line-height: 24px;
  }
  .pane + .pane {
    width: 43px;
  }

  /* Page tabs */
  .pages {
    height: 44px;
    background: #f3f2f1;
    display: flex;
    align-items: flex-start;
  }
  .device {
    margin-left: 13px;
    width: 30px;
    height: 39px;
    display: flex;
    justify-content: center;
    padding-top: 8px;
    align-items: flex-start;
  }
  .device.on {
    border-bottom: 4px solid #117865;
  }
  .device.phone {
    margin-left: 24px;
    padding-top: 6px;
  }
  .arrow {
    margin: 17px 0 0 20px;
  }
  .arrow + .arrow {
    margin-left: 22px;
  }
  .sheet {
    margin-left: 8px;
    width: 238px;
    height: 44px;
    background: #fff;
    border-left: 1px solid #8a8886;
    border-bottom: 5px solid #117865;
    font-size: 14px;
    font-weight: 500;
    padding-top: 4px;
  }
  .add {
    width: 49px;
    height: 40px;
    margin-top: 2px;
    background: #117865;
    display: flex;
    align-items: center;
    justify-content: center;
  }

  .status {
    height: 29px;
    background: #f3f2f1;
    border-top: 1px solid #dddbd9;
    display: flex;
    align-items: center;
    justify-content: space-between;
    padding: 0 22px 0 7px;
    color: #484644;
  }
  .zoom {
    display: flex;
    align-items: center;
  }
  .zoom input {
    appearance: none;
    width: 125px;
    height: 14px;
    margin: 0 7px 0 8px;
    background:
      linear-gradient(#555, #555) center / 2px 6px no-repeat,
      linear-gradient(#555, #555) center / 100% 1px no-repeat;
  }
  .zoom input::-webkit-slider-thumb {
    appearance: none;
    width: 5px;
    height: 14px;
    background: #555;
  }
  .pct {
    margin: 0 19px 0 22px;
    color: #797775;
  }
</style>
